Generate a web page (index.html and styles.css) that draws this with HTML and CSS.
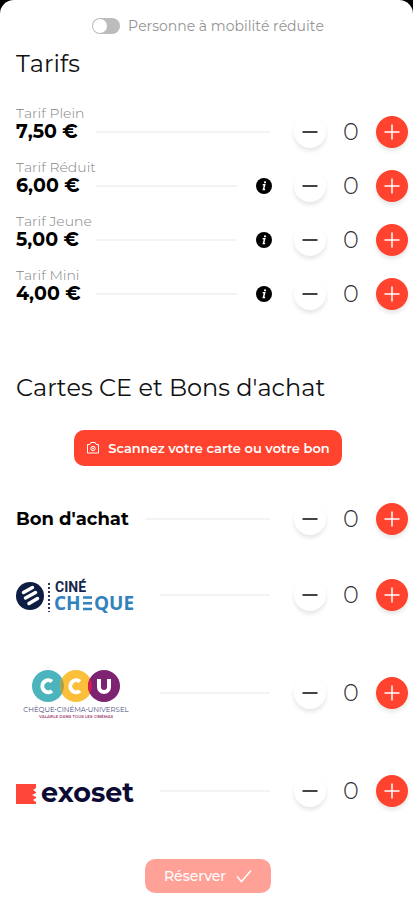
FILE: index.html
```html
<!DOCTYPE html>
<html lang="fr">
<head>
<meta charset="utf-8">
<meta name="viewport" content="width=device-width, initial-scale=1">
<title>Réservation</title>
<link rel="stylesheet" href="styles.css">
</head>
<body>
<svg class="defs" aria-hidden="true">
  <symbol id="minus" viewBox="0 0 32 32"><path d="M8.500 16h15" stroke="currentColor" stroke-width="1.700"/></symbol>
  <symbol id="plus" viewBox="0 0 32 32"><path d="M8.500 16h15M16 8.500v15" stroke="currentColor" stroke-width="1.500"/></symbol>
  <symbol id="info" viewBox="0 0 16 16"><circle cx="8" cy="8" r="8" fill="#000"/><path d="M6.700 6.800h2L7.400 11.500h1.700" fill="none" stroke="#fff" stroke-width="1.500"/><circle cx="9" cy="4.300" r="1.100" fill="#fff"/></symbol>
</svg>
<main class="sheet">
  <label class="access"><input type="checkbox" class="switch"><span>Personne à mobilité réduite</span></label>

  <h1 class="title">Tarifs</h1>
  <ul class="list">
    <li class="row">
      <div class="fare"><span class="fare-label">Tarif Plein</span><strong class="price">7,50 €</strong></div>
      <span class="rule"></span>
      <div class="counter"><button class="round" aria-label="Retirer"><svg><use href="#minus"/></svg></button><output>0</output><button class="round add" aria-label="Ajouter"><svg><use href="#plus"/></svg></button></div>
    </li>
    <li class="row">
      <div class="fare"><span class="fare-label">Tarif Réduit</span><strong class="price">6,00 €</strong></div>
      <span class="rule"></span>
      <button class="info" aria-label="Informations"><svg><use href="#info"/></svg></button>
      <div class="counter"><button class="round" aria-label="Retirer"><svg><use href="#minus"/></svg></button><output>0</output><button class="round add" aria-label="Ajouter"><svg><use href="#plus"/></svg></button></div>
    </li>
    <li class="row">
      <div class="fare"><span class="fare-label">Tarif Jeune</span><strong class="price">5,00 €</strong></div>
      <span class="rule"></span>
      <button class="info" aria-label="Informations"><svg><use href="#info"/></svg></button>
      <div class="counter"><button class="round" aria-label="Retirer"><svg><use href="#minus"/></svg></button><output>0</output><button class="round add" aria-label="Ajouter"><svg><use href="#plus"/></svg></button></div>
    </li>
    <li class="row">
      <div class="fare"><span class="fare-label">Tarif Mini</span><strong class="price">4,00 €</strong></div>
      <span class="rule"></span>
      <button class="info" aria-label="Informations"><svg><use href="#info"/></svg></button>
      <div class="counter"><button class="round" aria-label="Retirer"><svg><use href="#minus"/></svg></button><output>0</output><button class="round add" aria-label="Ajouter"><svg><use href="#plus"/></svg></button></div>
    </li>
  </ul>

  <h2 class="title vouchers">Cartes CE et Bons d'achat</h2>
  <button class="scan">
    <svg class="camera" viewBox="0 0 14 14" fill="none" stroke="currentColor"><path d="M1.500 3.500h2.300l1-2h4.400l1 2h2.300v8.500h-11z"/><circle cx="7" cy="7.500" r="2.200"/><circle cx="7" cy="7.500" r=".6"/></svg>
    Scannez votre carte ou votre bon
  </button>
  <ul class="list">
    <li class="row">
      <strong class="voucher">Bon d'achat</strong>
      <span class="rule"></span>
      <div class="counter"><button class="round" aria-label="Retirer"><svg><use href="#minus"/></svg></button><output>0</output><button class="round add" aria-label="Ajouter"><svg><use href="#plus"/></svg></button></div>
    </li>
    <li class="row tall">
      <svg class="logo" viewBox="0 0 128 56">
        <circle cx="14" cy="29" r="14" fill="#0d1d43"/>
        <path d="M7.500 25.500l9-5M9.500 31l10-5.500M13 36.500l8.500-5" stroke="#fff" stroke-width="3.500" stroke-linecap="round"/>
        <path d="M33 16v29" stroke="#24365a" stroke-width="2" stroke-dasharray="2 2"/>
        <text class="cine" x="39" y="25">CINÉ</text>
        <text class="cheque" x="38" y="43">CH</text>
        <path d="M67 30.500h9M67 36.200h9M67 41.900h9" stroke="#3182bd" stroke-width="2.500"/>
        <text class="cheque" x="78" y="43">QUE</text>
      </svg>
      <span class="rule"></span>
      <div class="counter"><button class="round" aria-label="Retirer"><svg><use href="#minus"/></svg></button><output>0</output><button class="round add" aria-label="Ajouter"><svg><use href="#plus"/></svg></button></div>
    </li>
    <li class="row tall">
      <svg class="logo" viewBox="0 0 128 56">
        <circle cx="32" cy="21" r="16" fill="#4bb4bd"/>
        <circle cx="60" cy="21" r="16" fill="#fbbf3b"/>
        <circle cx="88" cy="21" r="16" fill="#7c2371"/>
        <path d="M46 13.500a16 16 0 0 1 0 15a16 16 0 0 1 0-15z" fill="#a5a052"/>
        <path d="M74 13.500a16 16 0 0 1 0 15a16 16 0 0 1 0-15z" fill="#d71a4b"/>
        <g fill="none" stroke="#fff" stroke-width="4">
          <path d="M36 16.500a6 6 0 1 0 0 9.500M64 16.500a6 6 0 1 0 0 9.500M83 14v8a5 5 0 0 0 10 0v-8"/>
        </g>
        <text class="ccu-name" x="60" y="47">CHÈQUE•CINÉMA•UNIVERSEL</text>
        <text class="ccu-sub" x="60" y="53">VALABLE DANS TOUS LES CINÉMAS</text>
      </svg>
      <span class="rule"></span>
      <div class="counter"><button class="round" aria-label="Retirer"><svg><use href="#minus"/></svg></button><output>0</output><button class="round add" aria-label="Ajouter"><svg><use href="#plus"/></svg></button></div>
    </li>
    <li class="row tall">
      <svg class="logo" viewBox="0 0 128 56">
        <path d="M0 21h20v4l-3 2 3 2v1l-4 2 4 2v1l-3 2 3 2v2H0z" fill="#ff4438"/>
        <text class="exoset" x="25" y="39">exoset</text>
      </svg>
      <span class="rule"></span>
      <div class="counter"><button class="round" aria-label="Retirer"><svg><use href="#minus"/></svg></button><output>0</output><button class="round add" aria-label="Ajouter"><svg><use href="#plus"/></svg></button></div>
    </li>
  </ul>

  <button class="book" disabled>Réserver
    <svg class="check" viewBox="0 0 16 14" fill="none" stroke="currentColor" stroke-width="1.500"><path d="M1 7.500l4.500 5L15 1.500"/></svg>
  </button>
</main>
</body>
</html>
```
FILE: styles.css
```css
* { box-sizing: border-box; }
body {
  margin: 0;
  background: #000;
  color: #111;
  font-family: Montserrat, Inter, "Open Sans", sans-serif;
  font-kerning: none;
}
button {
  padding: 0;
  border: 0;
  font-family: inherit;
}
.defs { position: absolute; width: 0; height: 0; }
.sheet {
  display: flex;
  flex-direction: column;
  min-height: 100vh;
  padding: 16px 5px 7px 8px;
  border-radius: 14px 14px 0 0;
  background: #fff;
}
.access {
  display: flex;
  align-items: center;
  align-self: center;
  gap: 8px;
  height: 20px;
  color: #949494;
  font-size: 14px;
  font-weight: 400;
}
.switch {
  appearance: none;
  display: flex;
  width: 28px;
  height: 16px;
  margin: 0;
  padding: 1px;
  border-radius: 8px;
  background: #bcbcbc;
}
.switch::before {
  content: "";
  width: 14px;
  height: 14px;
  border-radius: 50%;
  background: #fff;
}
.switch:checked { justify-content: flex-end; background: #ff432e; }
.title {
  margin: 12px 0 25px;
  padding-left: 8px;
  font-size: 24px;
  line-height: 32px;
  font-weight: 400;
}
.vouchers { margin: 51px 0 26px; }
.list { margin: 0; padding: 0 0 0 8px; list-style: none; }
.row { display: flex; align-items: center; height: 54px; }
.tall { height: 98px; }
.fare {
  display: flex;
  flex-direction: column;
  width: 64px;
  padding-bottom: 16px;
  white-space: nowrap;
}
.fare-label {
  color: #858585;
  font-size: 14px;
  line-height: 16px;
  font-weight: 300;
}
.price, .voucher {
  color: #000;
  font-size: 18px;
  line-height: 22px;
  font-weight: 700;
}
.price { font-size: 19px; }
.rule {
  flex: 1;
  height: 2px;
  margin: 0 24px 0 16px;
  background: #f3f3f3;
}
.info {
  width: 16px;
  height: 16px;
  margin: 0 22px 0 -5px;
  border-radius: 50%;
  background: none;
}
.info svg { display: block; width: 16px; height: 16px; }
.counter {
  display: flex;
  align-items: center;
  justify-content: space-between;
  width: 114px;
}
.counter output {
  color: #333;
  font-size: 24px;
  line-height: 32px;
  font-weight: 300;
}
.round {
  width: 32px;
  height: 32px;
  border-radius: 50%;
  background: #fff;
  color: #222;
  box-shadow: 0 3px 4px #0000001a;
}
.round svg { display: block; width: 32px; height: 32px; }
.add { background: #ff432e; color: #fff; }
.scan {
  display: flex;
  align-items: center;
  align-self: center;
  justify-content: center;
  gap: 8px;
  height: 36px;
  margin-bottom: 26px;
  padding: 0 12px;
  border-radius: 10px;
  background: #ff432e;
  color: #fff;
  font-size: 13px;
  font-weight: 600;
}
.camera { width: 14px; height: 14px; }
.logo { width: 128px; height: 56px; }
.cine { font: 700 14px "Liberation Sans Narrow", Roboto, sans-serif; fill: #14264d; }
.cheque { font: 700 19px "Open Sans", sans-serif; fill: #3182bd; }
.ccu-name { font: 400 7px Montserrat, Lato, sans-serif; fill: #4d4d79; text-anchor: middle; }
.ccu-sub { font: 600 4px Montserrat, Lato, sans-serif; fill: #a34070; text-anchor: middle; }
.exoset { font: 700 27px Montserrat, Inter, sans-serif; fill: #0c0b34; }
.book {
  display: flex;
  align-items: center;
  align-self: center;
  justify-content: center;
  gap: 10px;
  width: 126px;
  height: 34px;
  margin: 19px 0 0;
  border-radius: 10px;
  background: #ffa197;
  color: #fff;
  font-size: 14px;
  font-weight: 500;
}
.check { width: 16px; height: 14px; }
```
